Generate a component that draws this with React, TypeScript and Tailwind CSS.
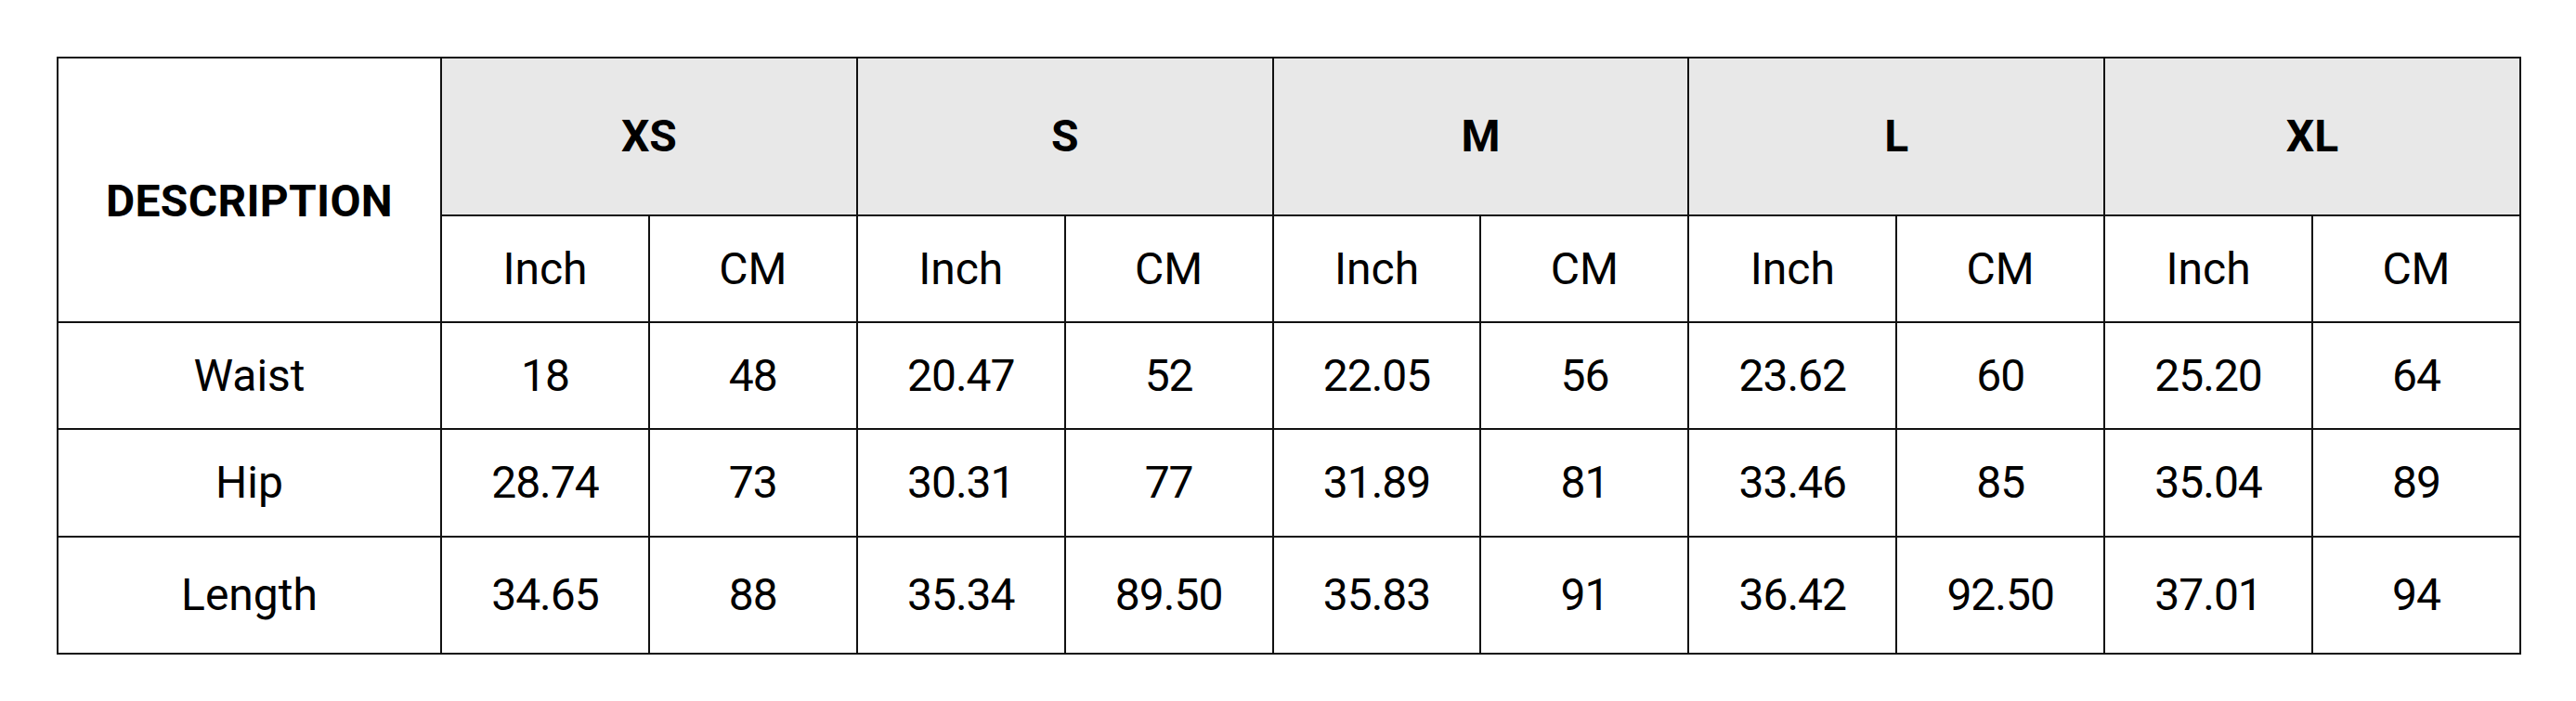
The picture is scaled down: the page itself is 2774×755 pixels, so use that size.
import React from "react";

const sizes = ["XS", "S", "M", "L", "XL"];
const rows: { label: string; values: string[]; h: string }[] = [
  { label: "Waist", values: ["18", "48", "20.47", "52", "22.05", "56", "23.62", "60", "25.20", "64"], h: "h-[115px]" },
  { label: "Hip", values: ["28.74", "73", "30.31", "77", "31.89", "81", "33.46", "85", "35.04", "89"], h: "h-[116px]" },
  { label: "Length", values: ["34.65", "88", "35.34", "89.50", "35.83", "91", "36.42", "92.50", "37.01", "94"], h: "h-[126px]" },
];

export default function App() {
  return (
    <div
      className="w-[2774px] h-[755px] bg-white pt-[61px] pl-[61px]"
      style={{ fontFamily: "Roboto, 'Liberation Sans', sans-serif" }}
    >
      <table className="table-fixed border-collapse border-2 border-black w-[2652px] text-black text-[48px] leading-none">
        <colgroup>
          <col className="w-[413px]" />
          {Array.from({ length: 10 }).map((_, i) => (
            <col key={i} className="w-[223.9px]" />
          ))}
        </colgroup>
        <thead>
          <tr className="h-[170px]">
            <th
              rowSpan={2}
              className="border-2 border-[#111] font-bold text-center align-middle pt-[24px] tracking-[0.3px]"
            >
              DESCRIPTION
            </th>
            {sizes.map((s) => (
              <th key={s} colSpan={2} className="border-2 border-[#111] bg-[#e8e8e8] font-bold text-center align-middle">
                {s}
              </th>
            ))}
          </tr>
          <tr className="h-[115px]">
            {sizes.map((s) => (
              <React.Fragment key={s}>
                <th className="border-2 border-[#111] font-normal text-center align-middle">Inch</th>
                <th className="border-2 border-[#111] font-normal text-center align-middle">CM</th>
              </React.Fragment>
            ))}
          </tr>
        </thead>
        <tbody>
          {rows.map((r) => (
            <tr key={r.label} className={r.h}>
              <td className="border-2 border-[#111] text-center align-middle">{r.label}</td>
              {r.values.map((v, i) => (
                <td key={i} className="border-2 border-[#111] text-center align-middle tracking-[-1px]">
                  {v}
                </td>
              ))}
            </tr>
          ))}
        </tbody>
      </table>
    </div>
  );
}
